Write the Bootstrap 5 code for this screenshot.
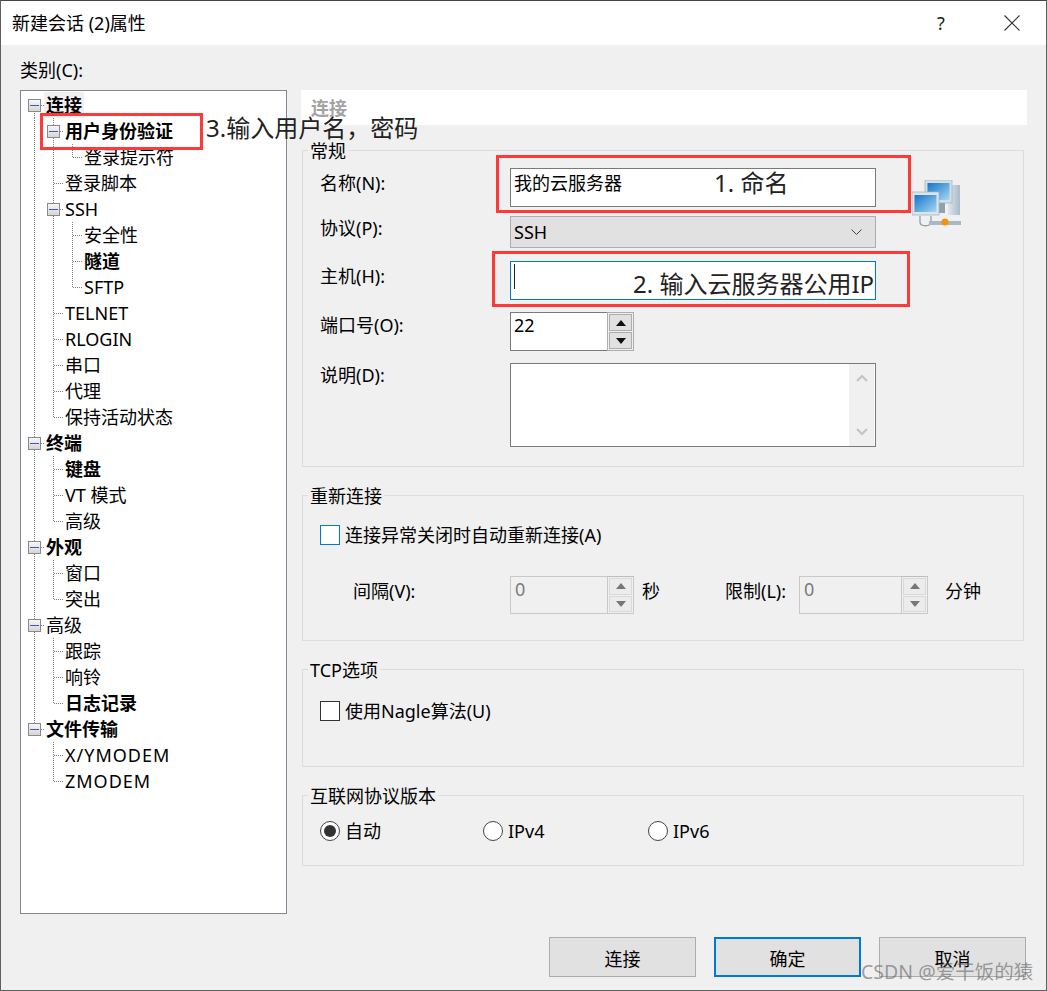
<!DOCTYPE html>
<html lang="zh-CN">
<head>
    <meta charset="UTF-8">
    <title>新建会话 (2)属性</title>
    <link href="https://cdn.jsdelivr.net/npm/bootstrap@5.3.0/dist/css/bootstrap.min.css" rel="stylesheet">
    <style>
        html, body { margin: 0; width: 1047px; height: 991px; overflow: hidden; }
        body {
            font-family: "Noto Sans", "Noto Sans CJK SC", sans-serif;
            font-size: 18px;
            line-height: 26px;
            color: #000;
            background-color: #f0f0f0;
        }
        .dlg { position: relative; width: 1047px; height: 991px; border: 1px solid #5f5f5f; border-top-color: #444; }
        .dlg-title { height: 44px; background: #fff; padding-left: 11px; padding-right: 26px; }
        .dlg-help { width: 16px; margin-right: 55px; text-align: center; color: #222; }
        .cat-label { height: 26px; margin: 12px 0 7px 19px; }

        /* tree */
        .tree-box { width: 267px; height: 824px; margin-left: 19px; background: #fff; border: 1px solid #828790; padding: 1px 0 0 4px; }
        .tree-row { height: 26px; }
        .gd { width: 19px; height: 26px; flex: none; display: flex; align-items: center; justify-content: center; }
        .gd-v, .gd-t { background: repeating-linear-gradient(#808080 0 1px, transparent 1px 2px) 9px 0 / 1px 100% no-repeat; }
        .gd-t, .gd-e { background-repeat: no-repeat; }
        .gd-t { background-image: repeating-linear-gradient(#808080 0 1px, transparent 1px 2px), repeating-linear-gradient(90deg, #808080 0 1px, transparent 1px 2px); background-position: 9px 0, 10px 13px; background-size: 1px 100%, 9px 1px; }
        .gd-e { background-image: repeating-linear-gradient(#808080 0 1px, transparent 1px 2px), repeating-linear-gradient(90deg, #808080 0 1px, transparent 1px 2px); background-position: 9px 0, 10px 13px; background-size: 1px 13px, 9px 1px; }
        .gd-s { background-image: repeating-linear-gradient(#808080 0 1px, transparent 1px 2px), repeating-linear-gradient(90deg, #808080 0 1px, transparent 1px 2px); background-position: 9px 13px, 10px 13px; background-size: 1px 13px, 9px 1px; background-repeat: no-repeat; }
        .exp { width: 13px; height: 13px; border: 1px solid #8a8a8a; background: linear-gradient(#f6f6f6, #d6d6d6); display: flex; align-items: center; justify-content: center; }
        .exp i { display: block; width: 9px; height: 1px; background: #3b5bb5; }
        .tree-text { margin-left: 2px; white-space: nowrap; }
        .tree-sel { margin-left: 0; padding: 0 2px; background: #f0f0f0; }
        .tree-wide { letter-spacing: 1px; }

        /* right side */
        .pane { width: 726px; margin-top: 45px; margin-left: 14px; }
        .pane-head { height: 35px; background: #fff; color: #a3a3a3; font-weight: 700; padding: 5px 0 0 10px; }
        .grp { margin: 28px 3px 0 1px; border: 1px solid #dcdcdc; padding: 0 17px; }
        .grp-first { margin-top: 25px; }
        .grp-name { width: fit-content; margin: -13px 0 0 -12px; padding: 0 2px; background: #f0f0f0; height: 26px; white-space: nowrap; }
        .grp-main { height: 317px; }
        .grp-main .grp-name { margin-bottom: 4px; }
        .grp-conn { height: 146px; }
        .grp-tcp { height: 98px; }
        .grp-ip { height: 71px; }

        .fld { margin-bottom: 12px; }
        .fld-name { margin-bottom: 9px; }
        .fld-proto { margin-bottom: 13px; }
        .fld-label { width: 190px; height: 26px; flex: none; }
        .lb-low { padding-top: 2px; }
        .lb-up { margin-top: -1px; }
        .win-input.form-control { width: 366px; height: 39px; flex: none; border: 1px solid #7a7a7a; border-radius: 0; padding: 0 3px 12px; font: inherit; color: #000; box-shadow: none; background: #fff; }
        .win-input.host-focus { border-color: #0078d7; }
        .net-icon { flex: none; margin: 12px 0 -21px 36px; }
        .win-combo { width: 366px; height: 32px; border: 1px solid #adadad; background: #e1e1e1; padding: 0 13px 0 3px; }
        .win-memo { width: 366px; height: 84px; border: 1px solid #7a7a7a; background: #fff; padding: 0 1px 0 0; }
        .memo-bar { width: 25px; background: #f0f0f0; padding: 10px 0; }
        .spin { width: 124px; height: 39px; flex: none; }
        .spin-val { flex: 1; border: 1px solid #7a7a7a; border-right: 0; background: #fff; padding: 0 3px 14px; display: flex; align-items: center; }
        .spin-btns { width: 27px; border: 1px solid #adadad; padding: 1px; gap: 1px; }
        .spin-btn { flex: 1; border: 1px solid #adadad; background: #e1e1e1; display: flex; align-items: center; justify-content: center; }
        .spin-off .spin-val { background: #f0f0f0; border-color: #c9c9c9; border-right: 0; color: #7b7b7b; padding: 0 4px 12px; }
        .spin-off .spin-btns { border-color: #c9c9c9; border-top-color: #bdbdbd; }
        .spin-off .spin-btn { background: #ececec; border-color: #d9d9d9; }
        .chk { width: 20px; height: 20px; flex: none; background: #fff; border: 1px solid #333; }
        .chk-focus { border-color: #0078d7; }
        .chk-text { margin-left: 5px; }
        .rd { width: 20px; height: 20px; flex: none; border: 1px solid #444; border-radius: 50%; background: #fff; display: flex; align-items: center; justify-content: center; }
        .rd i { display: block; width: 12px; height: 12px; border-radius: 50%; background: #333; }
        .rd-one { width: 163px; }
        .rd-two { width: 165px; }
        .conn-opt { margin-top: 13px; height: 26px; }
        .conn-limit { margin-top: 28px; height: 38px; padding-left: 33px; white-space: nowrap; }
        .spin-small { width: 124px; height: 38px; }
        .lim-a { width: 157px; flex: none; margin-bottom: 8px; }
        .lim-b { width: 64px; margin: 0 0 8px 8px; flex: none; }
        .lim-c { width: 74px; margin: 0 0 8px 19px; flex: none; }
        .lim-d { margin: 0 0 8px 17px; flex: none; }
        .spin-mid { width: 129px; }
        .tcp-opt { margin-top: 15px; height: 26px; }
        .ip-opt { margin-top: 9px; height: 26px; }

        /* footer */
        .dlg-foot { margin-top: 23px; padding-right: 20px; gap: 18px; }
        .btn.win-btn { width: 147px; height: 40px; border-radius: 0; background: #e1e1e1; border: 1px solid #adadad; color: #000; font-size: 18px; line-height: 26px; padding: 4px 0 0; }
        .btn.win-btn-def { border: 2px solid #0078d7; }

        /* red notes drawn over the dialog */
        .note-box { position: absolute; border: 3px solid #ff3838; }
        .note-text { position: absolute; font-size: 24px; line-height: 32px; color: #222; white-space: nowrap; }
        .note-a { left: 39px; top: 112px; width: 163px; height: 37px; }
        .note-b { left: 495px; top: 154px; width: 415px; height: 58px; }
        .note-c { left: 491px; top: 250px; width: 418px; height: 56px; }
        .text-a { left: 205px; top: 111px; }
        .text-b { left: 713px; top: 166px; }
        .text-c { left: 632px; top: 267px; }
        .caret-bar { position: absolute; left: 513px; top: 263px; width: 1px; height: 25px; background: #222; }
        .mark-csdn { position: absolute; left: 860px; top: 958px; font-size: 19.5px; color: rgba(100, 100, 100, .6); white-space: nowrap; }
    </style>
</head>
<body>

<div class="dlg">
    <!-- Title bar -->
    <div class="dlg-title d-flex align-items-center">
        <div class="flex-grow-1">新建会话 (2)属性</div>
        <div class="dlg-help">?</div>
        <svg width="16" height="16" viewBox="0 0 16 16"><path d="M.5.5l15 15M15.5.5l-15 15" stroke="#333" stroke-width="1.1" fill="none"/></svg>
    </div>

    <div class="d-flex">
        <!-- Category tree -->
        <div>
            <div class="cat-label">类别(C):</div>
            <div class="tree-box" id="tree"></div>
        </div>

        <!-- Settings -->
        <div class="pane">
            <div class="pane-head">连接</div>

            <div class="grp grp-first grp-main">
                <div class="grp-name">常规</div>
                <div class="d-flex fld-name">
                    <div class="fld-label lb-low">名称(N):</div>
                    <input class="form-control win-input" value="我的云服务器">
                    <svg class="net-icon" width="50" height="48" viewBox="0 0 50 48">
                        <defs>
                            <linearGradient id="scr" x1="0" y1="0" x2="1" y2="1"><stop offset="0" stop-color="#1673c8"/><stop offset="1" stop-color="#a4d8f2"/></linearGradient>
                            <linearGradient id="case" x1="0" y1="0" x2="1" y2="0"><stop offset="0" stop-color="#dfe8ee"/><stop offset="1" stop-color="#a9bac6"/></linearGradient>
                        </defs>
                        <rect x="36" y="5" width="12" height="30" fill="url(#case)"/>
                        <rect x="13" y="0" width="27" height="23" fill="#d3dfe7" stroke="#9fb0bc" stroke-width=".7"/>
                        <rect x="15.500" y="3" width="22" height="17" fill="url(#scr)"/>
                        <rect x="24" y="23" width="9" height="10" fill="#8fa3af"/>
                        <rect x="0" y="12" width="27" height="23" fill="#dbe5eb" stroke="#9fb0bc" stroke-width=".7"/>
                        <rect x="2.500" y="15" width="22" height="17" fill="url(#scr)"/>
                        <path d="M8 36v6c0 5 11 5 11 0v-6" fill="#eef2f5" stroke="#8fa0ab" stroke-width="1.300"/>
                        <rect x="17" y="41" width="32" height="4" fill="#a9b9c4"/>
                        <circle cx="33" cy="42" r="3.600" fill="#f2930f"/>
                    </svg>
                </div>
                <div class="d-flex fld-proto">
                    <div class="fld-label lb-up">协议(P):</div>
                    <div class="win-combo d-flex align-items-center justify-content-between">
                        <span>SSH</span>
                        <svg width="11" height="6" viewBox="0 0 11 6"><path d="M.5.5l5 5 5-5" stroke="#444" fill="none"/></svg>
                    </div>
                </div>
                <div class="d-flex fld">
                    <div class="fld-label lb-low">主机(H):</div>
                    <input class="form-control win-input host-focus" value="">
                </div>
                <div class="d-flex fld">
                    <div class="fld-label">端口号(O):</div>
                    <div class="spin d-flex">
                        <div class="spin-val">22</div>
                        <div class="spin-btns d-flex flex-column">
                            <div class="spin-btn"><svg width="10" height="6" viewBox="0 0 10 6"><path d="M5 0l5 6H0z" fill="#111"/></svg></div>
                            <div class="spin-btn"><svg width="10" height="6" viewBox="0 0 10 6"><path d="M0 0h10L5 6z" fill="#111"/></svg></div>
                        </div>
                    </div>
                </div>
                <div class="d-flex">
                    <div class="fld-label lb-up">说明(D):</div>
                    <div class="win-memo d-flex justify-content-end">
                        <div class="memo-bar d-flex flex-column justify-content-between align-items-center">
                            <svg width="12" height="8" viewBox="0 0 12 8"><path d="M1 7l5-5 5 5" stroke="#c4c4c4" stroke-width="2.2" fill="none"/></svg>
                            <svg width="12" height="8" viewBox="0 0 12 8"><path d="M1 1l5 5 5-5" stroke="#c4c4c4" stroke-width="2.2" fill="none"/></svg>
                        </div>
                    </div>
                </div>
            </div>

            <div class="grp grp-conn">
                <div class="grp-name">重新连接</div>
                <div class="d-flex align-items-center conn-opt">
                    <span class="chk chk-focus"></span>
                    <span class="chk-text">连接异常关闭时自动重新连接(A)</span>
                </div>
                <div class="d-flex align-items-center conn-limit">
                    <span class="lim-a">间隔(V):</span>
                    <div class="spin spin-small spin-off d-flex">
                        <div class="spin-val">0</div>
                        <div class="spin-btns d-flex flex-column">
                            <div class="spin-btn"><svg width="10" height="6" viewBox="0 0 10 6"><path d="M5 0l5 6H0z" fill="#777"/></svg></div>
                            <div class="spin-btn"><svg width="10" height="6" viewBox="0 0 10 6"><path d="M0 0h10L5 6z" fill="#777"/></svg></div>
                        </div>
                    </div>
                    <span class="lim-b">秒</span>
                    <span class="lim-c">限制(L):</span>
                    <div class="spin spin-small spin-mid spin-off d-flex">
                        <div class="spin-val">0</div>
                        <div class="spin-btns d-flex flex-column">
                            <div class="spin-btn"><svg width="10" height="6" viewBox="0 0 10 6"><path d="M5 0l5 6H0z" fill="#777"/></svg></div>
                            <div class="spin-btn"><svg width="10" height="6" viewBox="0 0 10 6"><path d="M0 0h10L5 6z" fill="#777"/></svg></div>
                        </div>
                    </div>
                    <span class="lim-d">分钟</span>
                </div>
            </div>

            <div class="grp grp-tcp">
                <div class="grp-name">TCP选项</div>
                <div class="d-flex align-items-center tcp-opt">
                    <span class="chk"></span>
                    <span class="chk-text">使用Nagle算法(U)</span>
                </div>
            </div>

            <div class="grp grp-ip">
                <div class="grp-name">互联网协议版本</div>
                <div class="d-flex align-items-center ip-opt">
                    <div class="d-flex align-items-center rd-one"><span class="rd"><i></i></span><span class="chk-text">自动</span></div>
                    <div class="d-flex align-items-center rd-two"><span class="rd"></span><span class="chk-text">IPv4</span></div>
                    <div class="d-flex align-items-center"><span class="rd"></span><span class="chk-text">IPv6</span></div>
                </div>
            </div>
        </div>
    </div>

    <!-- Buttons -->
    <div class="dlg-foot d-flex justify-content-end">
        <button class="btn win-btn" type="button">连接</button>
        <button class="btn win-btn win-btn-def" type="button">确定</button>
        <button class="btn win-btn" type="button">取消</button>
    </div>

    <!-- Notes on top of the dialog -->
    <div class="note-box note-a"></div>
    <div class="note-box note-b"></div>
    <div class="note-box note-c"></div>
    <div class="note-text text-a">3.输入用户名，密码</div>
    <div class="note-text text-b">1. 命名</div>
    <div class="note-text text-c">2. 输入云服务器公用IP</div>
    <div class="caret-bar"></div>
    <div class="mark-csdn">CSDN @爱干饭的猿</div>
</div>

<script src="https://cdn.jsdelivr.net/npm/bootstrap@5.3.0/dist/js/bootstrap.bundle.min.js"></script>
<script>
    // guides: v = line, t = tee, e = elbow, s = first row, _ = blank; capital = with expander
    const rows = [
        ['S', '连接', 'bs'],
        ['v T', '用户身份验证', 'b'],
        ['v v e', '登录提示符'],
        ['v t', '登录脚本'],
        ['v T', 'SSH'],
        ['v v t', '安全性'],
        ['v v t', '隧道', 'b'],
        ['v v e', 'SFTP'],
        ['v t', 'TELNET'],
        ['v t', 'RLOGIN'],
        ['v t', '串口'],
        ['v t', '代理'],
        ['v e', '保持活动状态'],
        ['T', '终端', 'b'],
        ['v t', '键盘', 'b'],
        ['v t', 'VT 模式'],
        ['v e', '高级'],
        ['T', '外观', 'b'],
        ['v t', '窗口'],
        ['v e', '突出'],
        ['T', '高级'],
        ['v t', '跟踪'],
        ['v t', '响铃'],
        ['v e', '日志记录', 'b'],
        ['E', '文件传输', 'b'],
        ['_ t', 'X/YMODEM', 'w'],
        ['_ e', 'ZMODEM', 'w']
    ];
    const tree = document.getElementById('tree');
    rows.forEach(([guides, label, flags = '']) => {
        const cells = guides.split(' ').map(g => {
            const kind = g.toLowerCase();
            const inner = g !== kind ? '<span class="exp"><i></i></span>' : '';
            return `<span class="gd ${kind === '_' ? '' : 'gd-' + kind}">${inner}</span>`;
        }).join('');
        const cls = (flags.includes('b') ? ' fw-bold' : '') + (flags.includes('s') ? ' tree-sel' : '') + (flags.includes('w') ? ' tree-wide' : '');
        tree.innerHTML += `<div class="tree-row d-flex align-items-center">${cells}<span class="tree-text${cls}">${label}</span></div>`;
    });
</script>
</body>
</html>
